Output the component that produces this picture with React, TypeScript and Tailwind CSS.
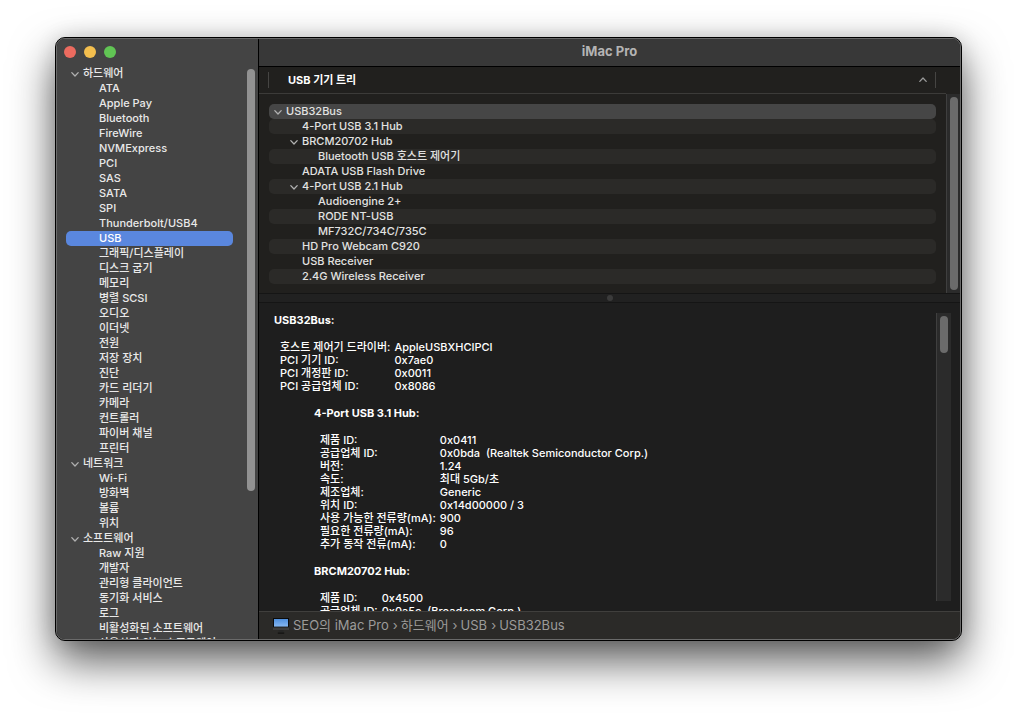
import { useState } from "react";
import clsx from "clsx";

interface Section {
  name: string;
  items: string[];
}

interface Device {
  name: string;
  level: number;
  expandable?: boolean;
}

interface Detail {
  title: string;
  nested: boolean;
  rows: [string, string][];
}

const SECTIONS: Section[] = [
  {
    name: "하드웨어",
    items: [
      "ATA",
      "Apple Pay",
      "Bluetooth",
      "FireWire",
      "NVMExpress",
      "PCI",
      "SAS",
      "SATA",
      "SPI",
      "Thunderbolt/USB4",
      "USB",
      "그래픽/디스플레이",
      "디스크 굽기",
      "메모리",
      "병렬 SCSI",
      "오디오",
      "이더넷",
      "전원",
      "저장 장치",
      "진단",
      "카드 리더기",
      "카메라",
      "컨트롤러",
      "파이버 채널",
      "프린터",
    ],
  },
  { name: "네트워크", items: ["Wi-Fi", "방화벽", "볼륨", "위치"] },
  {
    name: "소프트웨어",
    items: [
      "Raw 지원",
      "개발자",
      "관리형 클라이언트",
      "동기화 서비스",
      "로그",
      "비활성화된 소프트웨어",
      "사용하지 않는 소프트웨어",
    ],
  },
];

const DEVICES: Device[] = [
  { name: "USB32Bus", level: 0, expandable: true },
  { name: "4-Port USB 3.1 Hub", level: 1 },
  { name: "BRCM20702 Hub", level: 1, expandable: true },
  { name: "Bluetooth USB 호스트 제어기", level: 2 },
  { name: "ADATA USB Flash Drive", level: 1 },
  { name: "4-Port USB 2.1 Hub", level: 1, expandable: true },
  { name: "Audioengine 2+", level: 2 },
  { name: "RODE NT-USB", level: 2 },
  { name: "MF732C/734C/735C", level: 2 },
  { name: "HD Pro Webcam C920", level: 1 },
  { name: "USB Receiver", level: 1 },
  { name: "2.4G Wireless Receiver", level: 1 },
];

const DETAILS: Detail[] = [
  {
    title: "USB32Bus:",
    nested: false,
    rows: [
      ["호스트 제어기 드라이버:", "AppleUSBXHCIPCI"],
      ["PCI 기기 ID:", "0x7ae0"],
      ["PCI 개정판 ID:", "0x0011"],
      ["PCI 공급업체 ID:", "0x8086"],
    ],
  },
  {
    title: "4-Port USB 3.1 Hub:",
    nested: true,
    rows: [
      ["제품 ID:", "0x0411"],
      ["공급업체 ID:", "0x0bda  (Realtek Semiconductor Corp.)"],
      ["버전:", "1.24"],
      ["속도:", "최대 5Gb/초"],
      ["제조업체:", "Generic"],
      ["위치 ID:", "0x14d00000 / 3"],
      ["사용 가능한 전류량(mA):", "900"],
      ["필요한 전류량(mA):", "96"],
      ["추가 동작 전류(mA):", "0"],
    ],
  },
  {
    title: "BRCM20702 Hub:",
    nested: true,
    rows: [
      ["제품 ID:", "0x4500"],
      ["공급업체 ID:", "0x0a5c  (Broadcom Corp.)"],
    ],
  },
];

const PATH = ["SEO의 iMac Pro", "하드웨어", "USB", "USB32Bus"];

const INDENT = ["pl-[5px]", "pl-[21px]", "pl-[37px]"];

const Chevron = ({ className }: { className?: string }) => (
  <svg
    viewBox="0 0 8 8"
    className={clsx("size-2 shrink-0", className)}
    fill="none"
    stroke="currentColor"
    strokeWidth="1.3"
    strokeLinecap="round"
    strokeLinejoin="round"
  >
    <path d="M0.8 2.6 4 6l3.2-3.4" />
  </svg>
);

const ImacIcon = () => (
  <svg viewBox="0 0 16 16" className="size-4 shrink-0">
    <defs>
      <linearGradient id="screen" x1="0" y1="0" x2="0" y2="1">
        <stop offset="0" stopColor="#4f8fdd" />
        <stop offset="1" stopColor="#86b8f2" />
      </linearGradient>
    </defs>
    <rect width="16" height="9.5" fill="#0b0b0b" />
    <rect x="1" y="1" width="14" height="7.6" fill="url(#screen)" />
    <rect y="9.5" width="16" height="2.5" fill="#3d3d3d" />
    <path d="M5.8 12h4.4l.5 2.6H5.3z" fill="#262626" />
    <rect x="4.8" y="14.6" width="6.4" height="1" fill="#0d0d0d" />
  </svg>
);

const Sidebar = () => {
  const [selected, setSelected] = useState("USB");

  return (
    <aside className="flex w-[202px] shrink-0 flex-col border-r border-black bg-[#444444]">
      <div className="flex h-[27px] shrink-0 items-center gap-2 pb-0.5 pl-[7px]">
        <button aria-label="닫기" className="size-3 rounded-full bg-[#ec6b5f]" />
        <button aria-label="최소화" className="size-3 rounded-full bg-[#f4bf4e]" />
        <button aria-label="확대" className="size-3 rounded-full bg-[#61c554]" />
      </div>
      <div className="flex min-h-0 flex-1">
        <nav className="min-w-0 flex-1 overflow-hidden pl-[9px] text-[#e9e9e9]">
          {SECTIONS.map((section) => (
            <div key={section.name}>
              <button className="flex h-[15px] w-full items-center gap-1 pl-[5px]">
                <Chevron className="text-[#b0b0b0]" />
                {section.name}
              </button>
              {section.items.map((item) => (
                <button
                  key={item}
                  onClick={() => setSelected(item)}
                  className={clsx(
                    "flex h-[15px] w-full items-center rounded-[5px] pl-[33px] whitespace-nowrap",
                    selected === item && "bg-[#5a87de] text-white"
                  )}
                >
                  {item}
                </button>
              ))}
            </div>
          ))}
        </nav>
        <div className="w-[25px] shrink-0 pt-[3px] pl-[14px]">
          <div className="h-[74%] w-2 rounded-full bg-[#929292]" />
        </div>
      </div>
    </aside>
  );
};

const DeviceTree = () => {
  const [selected, setSelected] = useState("USB32Bus");

  return (
    <section>
      <div className="flex h-[26px] items-center bg-[#21201e] px-[9px]">
        <button className="flex h-4 flex-1 items-center justify-between border-l border-[#464543] pr-2 pl-[19px] font-bold text-white">
          USB 기기 트리
          <Chevron className="rotate-180 text-[#9a9a9a]" />
        </button>
        <div className="mr-[15px] h-4 w-px bg-[#464543]" />
      </div>
      <div className="flex bg-[#21201e]">
        <ul className="min-w-0 flex-1 border-t border-[#3c3b39] px-[10px] pt-[10px] pb-[9px] text-[#e2e2e1]">
          {DEVICES.map((device, i) => (
            <li key={device.name}>
              <button
                onClick={() => setSelected(device.name)}
                className={clsx(
                  "flex h-[15px] w-full items-center gap-1 rounded-[5px]",
                  INDENT[device.level],
                  selected === device.name
                    ? "bg-[#464646]"
                    : i % 2 === 1 && "bg-[#2b2a28]"
                )}
              >
                {device.expandable ? (
                  <Chevron className="text-[#b0b0b0]" />
                ) : (
                  <span className="w-2" />
                )}
                {device.name}
              </button>
            </li>
          ))}
        </ul>
        <div className="mt-px flex w-[14px] shrink-0 justify-center border-l border-[#3f3f3f] bg-[#2b2b2b] py-[3px]">
          <div className="w-2 rounded-full bg-[#6b6b6b]" />
        </div>
      </div>
    </section>
  );
};

const DetailPane = () => (
  <section className="flex min-h-0 flex-1 bg-[#1e1e1e]">
    <div className="min-w-0 flex-1 overflow-hidden pt-[11px] pl-[15px] leading-[13px] text-white">
      {DETAILS.map((detail) => (
        <div
          key={detail.title}
          className={clsx("mb-[14px]", detail.nested && "pl-10")}
        >
          <h2 className="h-[13px] font-bold">{detail.title}</h2>
          <dl className="mt-[14px] grid auto-rows-[13px] grid-cols-[auto_1fr] gap-x-1 pl-[6px] whitespace-pre">
            {detail.rows.map(([label, value]) => (
              <div key={label} className="contents">
                <dt>{label}</dt>
                <dd>{value}</dd>
              </div>
            ))}
          </dl>
        </div>
      ))}
    </div>
    <div className="my-[10px] mr-[9px] flex w-[15px] shrink-0 justify-center border-l border-[#3f3f3f] bg-[#2b2b2b] pt-[3px]">
      <div className="h-[37px] w-2 rounded-full bg-[#6b6b6b]" />
    </div>
  </section>
);

const PathBar = () => (
  <footer className="flex h-7 shrink-0 items-center gap-1 border-t border-[#403f3d] bg-[#2b2a28] pl-[14px] text-[13px] font-normal text-[#9c9b9a]">
    <ImacIcon />
    {PATH.map((part, i) => (
      <span key={part} className="flex items-center gap-[3px]">
        {i > 0 && <span>›</span>}
        {part}
      </span>
    ))}
  </footer>
);

export default function App() {
  return (
    <div className="flex h-screen bg-white px-[55px] pt-[37px] pb-[73px] font-[Inter,'Noto_Sans_CJK_KR',sans-serif] text-[11px] font-medium">
      <div className="min-w-0 flex-1 overflow-hidden rounded-[10px] border border-black bg-[#6a6a6a] shadow-[0_20px_44px_rgba(0,0,0,0.65),0_0_20px_rgba(0,0,0,0.12)]">
        <div className="flex h-full overflow-hidden rounded-[9px] border border-[#6a6a6a] bg-[#1e1e1e]">
          <Sidebar />
          <main className="flex min-w-0 flex-1 flex-col">
            <header className="flex h-7 shrink-0 items-center justify-center border-b border-black bg-[#383838] pb-0.5">
              <h1 className="text-[13px] font-bold text-[#b4b4b4]">iMac Pro</h1>
            </header>
            <DeviceTree />
            <div className="flex h-[10px] shrink-0 items-center justify-center border-y border-[#151515] bg-[#212121]">
              <div className="size-[6px] rounded-full bg-[#3b3b3b]" />
            </div>
            <DetailPane />
            <PathBar />
          </main>
        </div>
      </div>
    </div>
  );
}
